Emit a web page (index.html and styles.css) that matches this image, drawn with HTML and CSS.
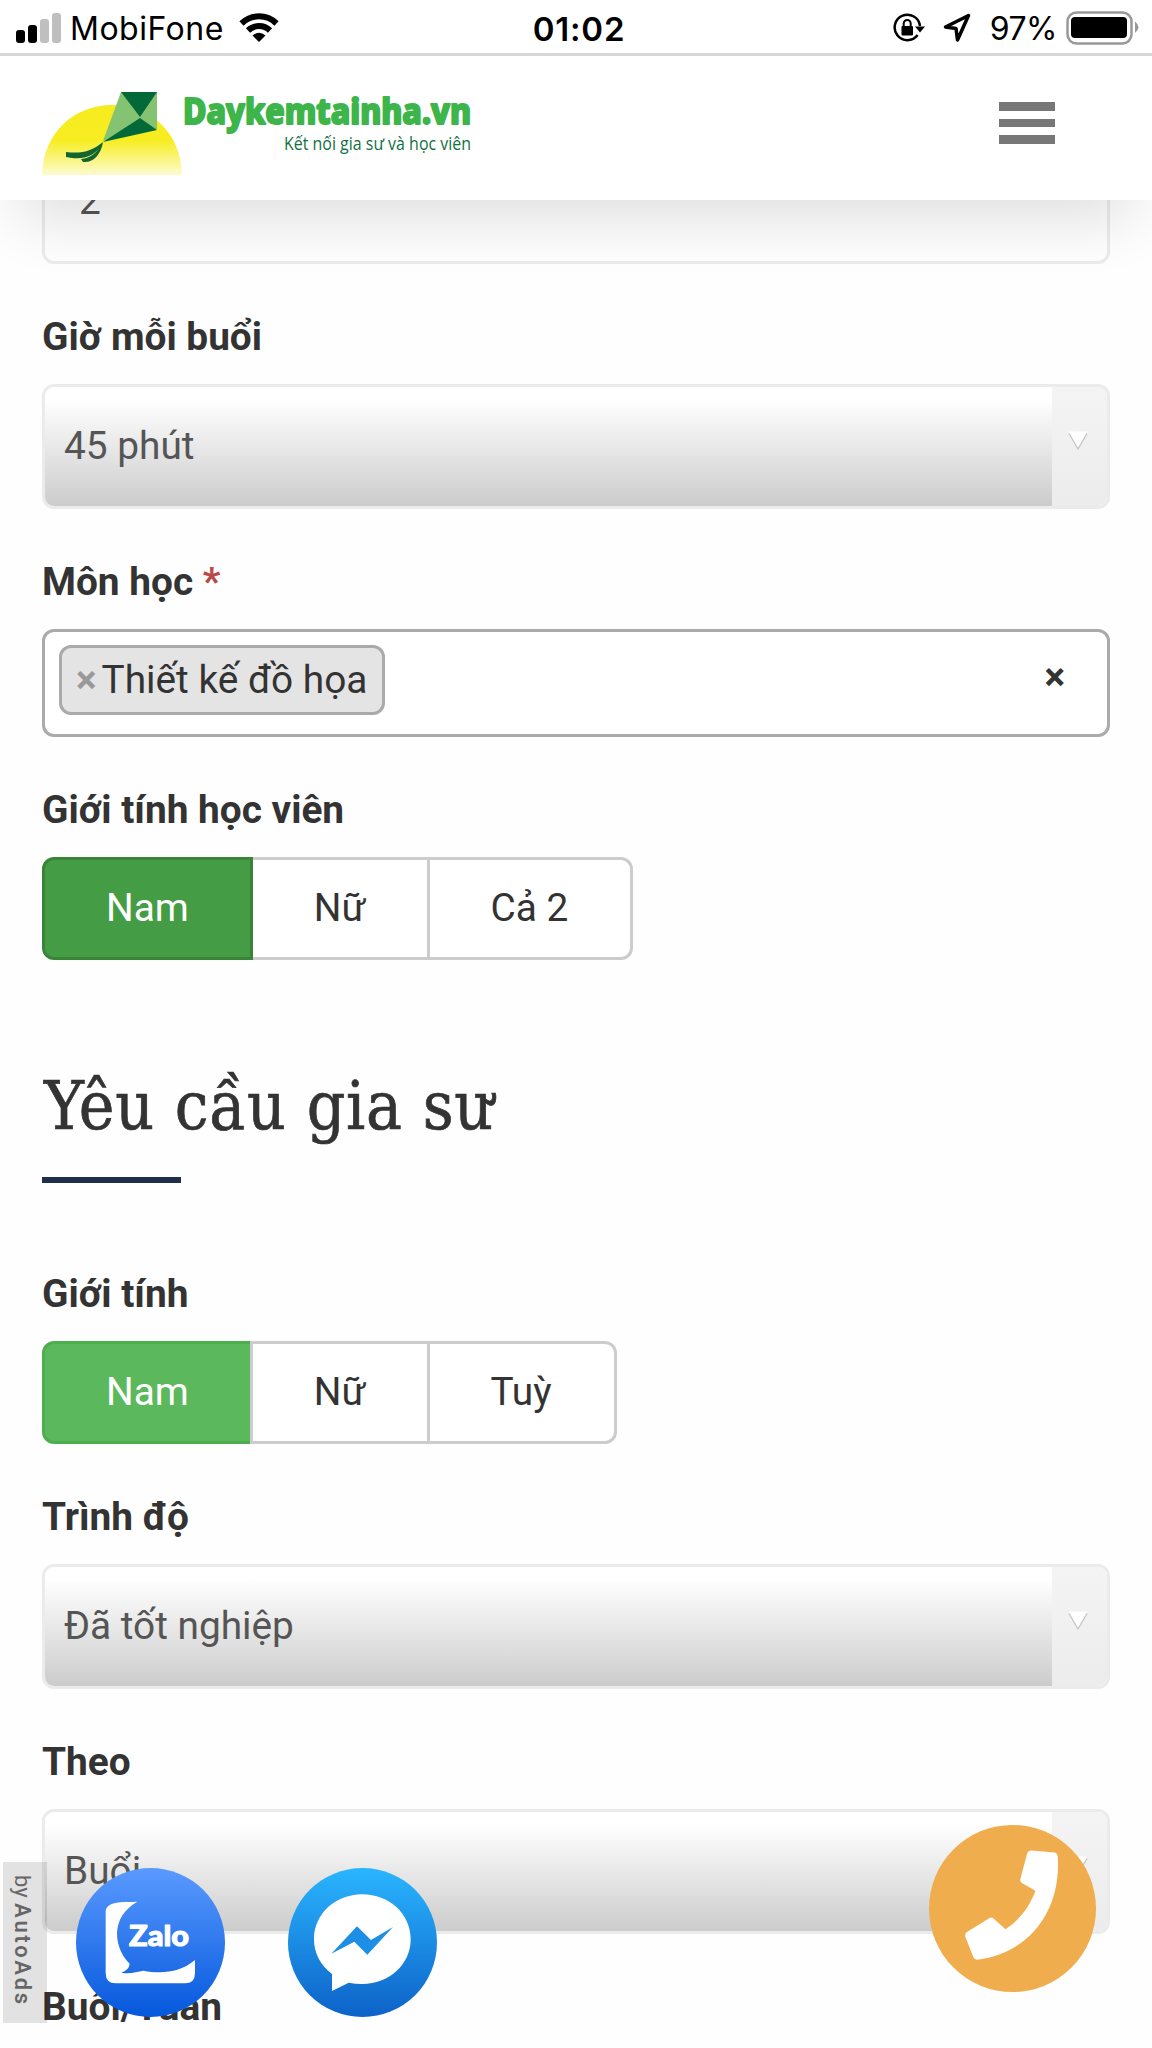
FILE: index.html
```html
<!DOCTYPE html>
<html lang="vi">
<head>
    <meta charset="UTF-8">
    <meta name="viewport" content="width=device-width, initial-scale=1.0">
    <title>Daykemtainha.vn</title>
    <link rel="stylesheet" href="styles.css">
</head>
<body>

<div class="status-bar">
    <div class="status-left">
        <svg class="signal" width="45" height="32" viewBox="0 0 45 32">
            <rect x="0" y="18" width="9" height="13" rx="3"/>
            <rect x="12" y="13" width="9" height="18" rx="3"/>
            <rect class="off" x="24" y="7" width="9" height="24" rx="3"/>
            <rect class="off" x="36" y="1" width="9" height="30" rx="3"/>
        </svg>
        <span class="carrier">MobiFone</span>
        <svg class="wifi" width="40" height="30" viewBox="0 0 40 30">
            <path class="arc" d="M2.500 10.500A25 25 0 0 1 37.500 10.500"/>
            <path class="arc" d="M9 17.500A16 16 0 0 1 31 17.500"/>
            <path d="M13.500 22.500Q20 17 26.500 22.500L20 29Z"/>
        </svg>
    </div>
    <div class="clock">01:02</div>
    <div class="status-right">
        <svg class="lock" width="32" height="30" viewBox="0 0 32 30">
            <path class="line" d="M24.600 22A12.700 12.700 0 1 1 27 13"/>
            <path d="M22 13.500H32L27 19.500Z"/>
            <rect x="8.500" y="13" width="11.500" height="9.500" rx="1"/>
            <path class="thin" d="M10.700 14V10.500A3.500 3.500 0 0 1 17.700 10.500V14"/>
        </svg>
        <svg class="location" width="28" height="30" viewBox="0 0 28 30">
            <path d="M25.500 2.500L14.500 27L13 15.500L2.500 14Z"/>
        </svg>
        <span class="percent">97%</span>
        <svg class="battery" width="74" height="34" viewBox="0 0 74 34">
            <rect class="shell" x="1.500" y="1.500" width="64" height="31" rx="9"/>
            <rect x="5" y="6" width="56" height="21" rx="4"/>
            <path class="cap" d="M69 10.500Q76 16 69 22Z"/>
        </svg>
    </div>
</div>

<header class="header">
    <svg class="logo" width="460" height="90" viewBox="0 0 460 90">
        <defs>
            <linearGradient id="sun" x1="0" y1="0" x2="0" y2="1">
                <stop offset="0" stop-color="#f5eb1e"/>
                <stop offset=".5" stop-color="#f7ed20"/>
                <stop offset="1" stop-color="#fdfbd0"/>
            </linearGradient>
        </defs>
        <path fill="url(#sun)" d="M0 83C1 40 33 13 70 13C108 13 139 40 140 83Z"/>
        <path fill="#84c372" d="M79 0L115 0V37L61 49Z"/>
        <path fill="#046938" d="M79 0H115L98 25ZM98 26L115 38L61 50Z"/>
        <path fill="#13652f" d="M61 50C50 59 40 62 24 60V65C42 69 54 64 61 50C55 61 49 66 39 67L41 70C52 71 59 62 61 50Z"/>
        <text class="logo-name" x="141" y="32" textLength="288" lengthAdjust="spacingAndGlyphs">Daykemtainha.vn</text>
        <text class="logo-tagline" x="242" y="58" textLength="187" lengthAdjust="spacingAndGlyphs">Kết nối gia sư và học viên</text>
    </svg>
    <button type="button" class="menu" aria-label="Menu">
        <span></span>
        <span></span>
        <span></span>
    </button>
</header>

<form class="form">
    <div class="field">
        <div class="input">2</div>
    </div>

    <div class="field">
        <label>Giờ mỗi buổi</label>
        <div class="select">
            <div class="select-value">45 phút</div>
            <div class="select-arrow"><svg width="20" height="22" viewBox="0 0 20 22"><path d="M1 1.500H19L10 18Z"/><polyline points="1,3.500 10,19 19,3.500"/></svg></div>
        </div>
    </div>

    <div class="field">
        <label>Môn học <span class="required">*</span></label>
        <div class="tags">
            <div class="tag"><span class="tag-remove">×</span>Thiết kế đồ họa</div>
            <span class="clear">×</span>
        </div>
    </div>

    <div class="field">
        <label>Giới tính học viên</label>
        <div class="btn-group">
            <div class="btn pressed">Nam</div>
            <div class="btn">Nữ</div>
            <div class="btn">Cả 2</div>
        </div>
    </div>

    <h2>Yêu cầu gia sư</h2>

    <div class="field">
        <label>Giới tính</label>
        <div class="btn-group">
            <div class="btn active">Nam</div>
            <div class="btn">Nữ</div>
            <div class="btn">Tuỳ</div>
        </div>
    </div>

    <div class="field">
        <label>Trình độ</label>
        <div class="select">
            <div class="select-value">Đã tốt nghiệp</div>
            <div class="select-arrow"><svg width="20" height="22" viewBox="0 0 20 22"><path d="M1 1.500H19L10 18Z"/><polyline points="1,3.500 10,19 19,3.500"/></svg></div>
        </div>
    </div>

    <div class="field">
        <label>Theo</label>
        <div class="select">
            <div class="select-value">Buổi</div>
            <div class="select-arrow"><svg width="20" height="22" viewBox="0 0 20 22"><path d="M1 1.500H19L10 18Z"/><polyline points="1,3.500 10,19 19,3.500"/></svg></div>
        </div>
    </div>

    <div class="field">
        <label>Buổi/Tuần</label>
    </div>
</form>

<!-- Botones flotantes -->
<div class="autoads">by <b>AutoAds</b></div>

<svg class="float zalo" viewBox="228 383 447 447">
    <defs>
        <linearGradient id="zaloBg" x1="0" y1="0" x2="0" y2="1">
            <stop offset="0" stop-color="#5a9aff"/>
            <stop offset="1" stop-color="#0558dc"/>
        </linearGradient>
    </defs>
    <circle cx="451.500" cy="606.500" r="223.500" fill="url(#zaloBg)"/>
    <path fill="#fff" d="M412 484C385 486 317 478 317 514V698Q317 729 347 729H555Q585 729 585 698V659C540 697 485 701 430 691C410 694 390 703 364 697Q387 689 389 670C340 620 330 530 412 484Z"/>
    <text class="zalo-text" x="387" y="617" textLength="180" lengthAdjust="spacingAndGlyphs">Zalo</text>
</svg>

<svg class="float messenger" viewBox="863 383 447 447">
    <defs>
        <linearGradient id="messengerBg" x1="0" y1="0" x2="0" y2="1">
            <stop offset="0" stop-color="#2ab5ff"/>
            <stop offset="1" stop-color="#0d62c8"/>
        </linearGradient>
    </defs>
    <circle cx="1086.500" cy="606.500" r="223.500" fill="url(#messengerBg)"/>
    <path fill="#fff" d="M1086 462C1166 462 1231 520 1231 597C1231 673 1166 731 1086 731Q1064 731 1045 727L995 752V701C960 675 941 638 941 597C941 520 1006 462 1086 462Z"/>
    <path fill="#1d8ee6" d="M993 640L1070 558L1112 599L1178 560L1101 643L1062 604Z"/>
</svg>

<svg class="float phone" viewBox="147 855 502 502">
    <circle cx="398" cy="1106" r="251" fill="#f0ad4e"/>
    <path fill="#fff" d="M455 932L524 938Q532 939 534 950C545 1110 450 1240 293 1260Q284 1261 280 1252L256 1190Q254 1182 261 1177L328 1135Q335 1131 341 1136L377 1168C420 1140 450 1100 467 1053L426 1029Q419 1024 422 1016L442 941Q445 932 455 932Z"/>
</svg>

</body>
</html>
```
FILE: styles.css
```css
body {
    position: relative;
    height: 2048px;
    margin: 0;
    overflow: hidden;
    background-color: #FEFEFE;
    color: #333333;
    font-family: Roboto, Arial, sans-serif;
    font-size: 38.800px;
    line-height: 56px;
}

/* Barra de estado */
.status-bar {
    display: grid;
    grid-template-columns: 1fr auto 1fr;
    align-items: center;
    box-sizing: border-box;
    height: 56px;
    padding: 0 10px 0 16px;
    border-bottom: 3px solid #D6D6D6;
    background-color: #FFFFFF;
    color: #000000;
    font-family: Inter, "Liberation Sans", sans-serif;
    font-size: 32px;
    line-height: 48px;
}
.status-left, .status-right {
    display: flex;
    align-items: center;
}
.status-right {
    justify-content: flex-end;
}
.carrier, .clock, .percent {
    margin-top: 5px;
}
.signal {
    margin: 2px 9px 0 0;
}
.signal .off {
    fill: #BFBFBF;
}
.carrier {
    letter-spacing: 0.500px;
}
.wifi {
    margin: 2px 0 0 15px;
}
.wifi .arc {
    fill: none;
    stroke: #000000;
    stroke-width: 6;
}
.clock {
    font-size: 33px;
    font-weight: 600;
    letter-spacing: 0.800px;
}
.lock {
    margin: 2px 18px 0 0;
}
.lock .line, .lock .thin {
    fill: none;
    stroke: #000000;
    stroke-width: 2.500;
}
.lock .thin {
    stroke-width: 2;
}
.location {
    margin: 3px 19px 0 0;
    fill: none;
    stroke: #000000;
    stroke-width: 3.500;
    stroke-linejoin: round;
}
.percent {
    letter-spacing: -0.500px;
}
.battery {
    margin: 2px 2px 0 9px;
}
.battery .shell {
    fill: none;
    stroke: #999999;
    stroke-width: 2.500;
}
.battery .cap {
    fill: #999999;
}

/* Cabecera */
.header {
    position: relative;
    z-index: 1;
    display: flex;
    justify-content: space-between;
    align-items: flex-start;
    box-sizing: border-box;
    height: 144px;
    padding: 36px 97px 0 42px;
    background-color: #FFFFFF;
    box-shadow: 0 40px 60px -20px rgba(0,0,0,0.12);
}
.logo {
    overflow: visible;
}
.logo-name {
    fill: #3DB54A;
    stroke: #3DB54A;
    stroke-width: 2;
    stroke-linejoin: round;
    font-family: "Noto Sans", "Open Sans", sans-serif;
    font-size: 35px;
    font-weight: 800;
}
.logo-tagline {
    fill: #13703F;
    font-family: "Open Sans", sans-serif;
    font-size: 18px;
}
.menu {
    display: flex;
    flex-direction: column;
    gap: 8px;
    width: 56px;
    margin-top: 10px;
    padding: 0;
    border: none;
    background: none;
}
.menu span {
    height: 8.600px;
    background-color: #777777;
}

/* Formulario */
.form {
    margin-top: -61px;
    padding: 0 42px;
}
.field {
    margin-bottom: 45px;
}
label {
    display: block;
    margin-bottom: 19px;
    font-weight: bold;
}
.required {
    color: #B94A48;
}
.input, .select {
    box-sizing: border-box;
    height: 125px;
    border: 3px solid #EBEBEB;
    border-radius: 12px;
    color: #555555;
}
.input {
    padding: 31px 34px;
}
.select {
    display: flex;
    overflow: hidden;
}
.select-value {
    flex: 1;
    padding: 31px 19px;
    background: linear-gradient(#FFFFFF 10%, #CCCCCC);
}
.select-arrow {
    width: 55px;
    padding: 43px 0 0 16px;
    box-sizing: border-box;
    background: linear-gradient(#F4F4F4, #ECECEC);
    line-height: 0;
}
.select-arrow path {
    fill: #FFFFFF;
}
.select-arrow polyline {
    fill: none;
    stroke: #C4C4C4;
    stroke-width: 1.200;
}
.tags {
    display: flex;
    justify-content: space-between;
    box-sizing: border-box;
    height: 108px;
    padding: 13px 42px 0 14px;
    border: 3px solid #AAAAAA;
    border-radius: 12px;
    background-color: #FFFFFF;
}
.tag {
    box-sizing: border-box;
    height: 70px;
    padding: 4px 15px 0 14px;
    border: 3px solid #AAAAAA;
    border-radius: 12px;
    background-color: #E4E4E4;
}
.tag-remove {
    margin-right: 5px;
    color: #999999;
    font-weight: bold;
}
.clear {
    margin-top: 4px;
    font-weight: bold;
}
.btn-group {
    display: flex;
}
.btn {
    box-sizing: border-box;
    height: 103px;
    padding: 20px 61px 0;
    border: 3px solid #CCCCCC;
    background-color: #FFFFFF;
}
.btn + .btn {
    margin-left: -3px;
}
.btn:first-child {
    border-radius: 12px 0 0 12px;
}
.btn:last-child {
    padding-right: 62px;
    border-radius: 0 12px 12px 0;
}
.btn.pressed {
    position: relative;
    border-color: #398439;
    background-color: #449D44;
    color: #FFFFFF;
}
.btn.active {
    border-color: #4CAE4C;
    background-color: #5CB85C;
    color: #FFFFFF;
}
h2 {
    margin: 101px 0 83px;
    font-family: "Roboto Slab", "DejaVu Serif Condensed", "DejaVu Serif", serif;
    font-size: 67px;
    font-weight: normal;
    letter-spacing: 0.800px;
    line-height: 90px;
    text-indent: 2px;
    -webkit-text-stroke: 0.700px #333333;
}
h2::after {
    content: "";
    display: block;
    width: 139px;
    height: 6px;
    margin-top: 26px;
    background-color: #1F2F4A;
}

/* Botones flotantes */
.autoads {
    position: absolute;
    left: 3px;
    top: 1862px;
    width: 44px;
    height: 161px;
    box-sizing: border-box;
    padding-top: 13px;
    background-color: rgba(0,0,0,0.11);
    color: #666666;
    font-size: 22px;
    line-height: 38px;
    white-space: nowrap;
    writing-mode: vertical-lr;
}
.autoads b {
    font-weight: 600;
    letter-spacing: 2.700px;
}
.float {
    position: absolute;
}
.zalo {
    left: 76px;
    top: 1868px;
    width: 149px;
    height: 149px;
}
.zalo-text {
    fill: #FFFFFF;
    stroke: #FFFFFF;
    stroke-width: 3;
    stroke-linejoin: round;
    font-family: Lato, sans-serif;
    font-size: 84px;
    font-weight: 900;
}
.messenger {
    left: 287.500px;
    top: 1868px;
    width: 149px;
    height: 149px;
}
.phone {
    left: 929px;
    top: 1825px;
    width: 167px;
    height: 167px;
}
```
